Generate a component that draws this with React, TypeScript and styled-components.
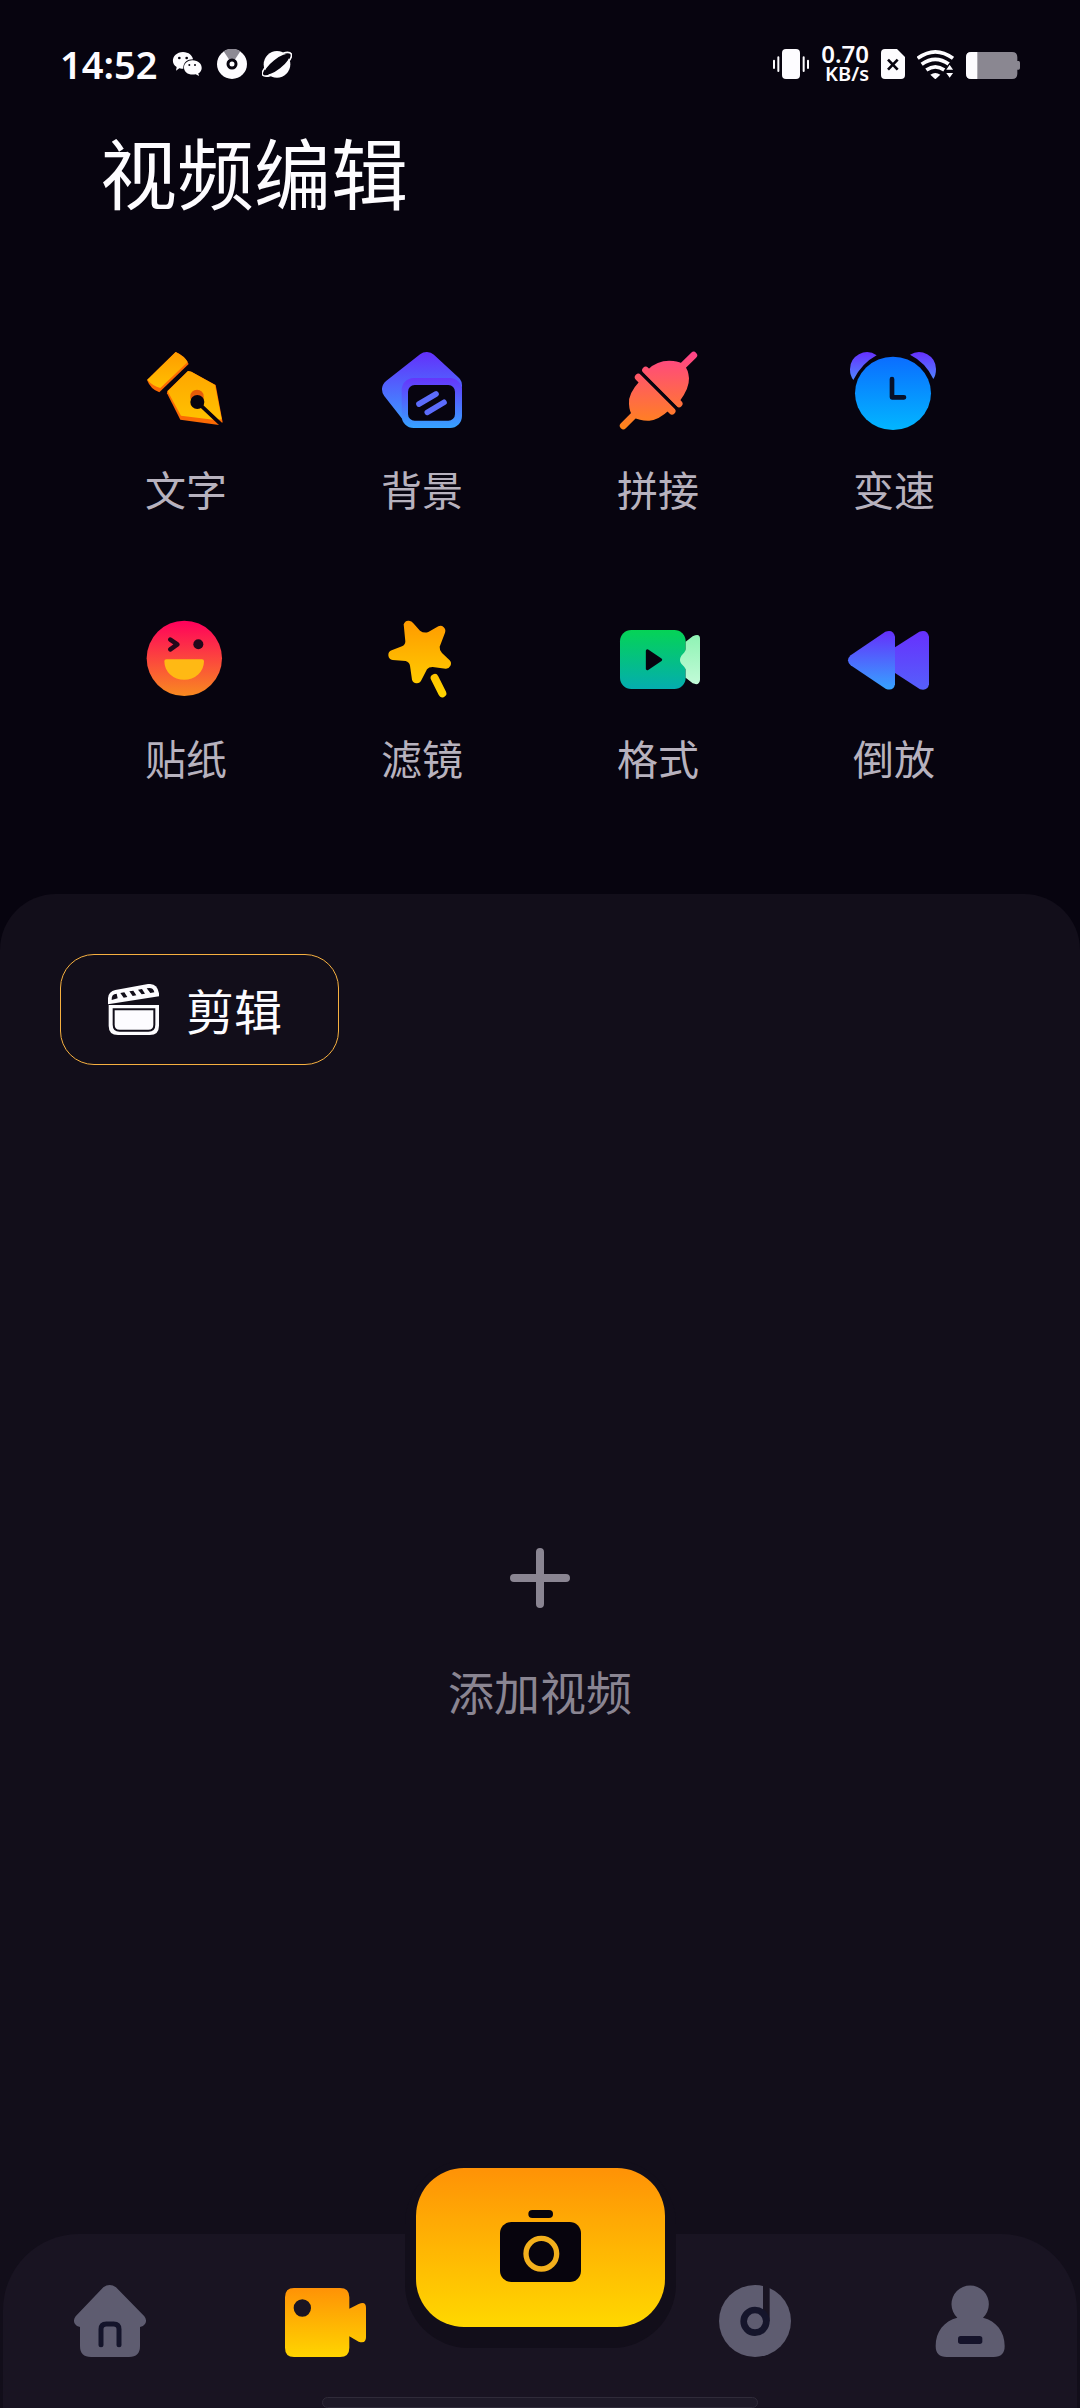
import React from "react";
import styled, { createGlobalStyle } from "styled-components";

const color = {
  page: "#07040f",
  panel: "#120e1a",
  bar: "#191422",
  ink: "#fdfcff",
  label: "#b7b2be",
  muted: "#8a8592",
  idle: "#5e5c70",
  outline: "#f6b040",
};

const GlobalStyle = createGlobalStyle`
  * { box-sizing: border-box; }
  body {
    margin: 0;
    background: ${color.page};
    color: ${color.ink};
    font-family: "Noto Sans", "Noto Sans CJK SC", sans-serif;
  }
  button { font: inherit; color: inherit; background: none; border: 0; padding: 0; cursor: pointer; }
  svg { display: block; flex: none; }
`;

const Screen = styled.div`
  min-height: 100vh;
  display: flex;
  flex-direction: column;
`;

const StatusBar = styled.header`
  display: flex;
  justify-content: space-between;
  align-items: center;
  height: 128px;
  padding: 0 60px;
`;

const StatusGroup = styled.div<{ $gap: number }>`
  display: flex;
  align-items: center;
  gap: ${(p) => p.$gap}px;
`;

const Time = styled.time`
  font-size: 38px;
  line-height: 40px;
  font-weight: 600;
`;

const Speed = styled.div`
  display: flex;
  flex-direction: column;
  align-items: flex-end;
  font-size: 24px;
  line-height: 20px;
  font-weight: 600;
  small {
    font-size: 20px;
    line-height: 20px;
  }
`;

const Title = styled.h1`
  margin: 0;
  padding: 0 100px;
  font-size: 77px;
  line-height: 94px;
  font-weight: 400;
`;

const ToolGrid = styled.section`
  display: grid;
  grid-template-columns: repeat(4, 1fr);
  row-gap: 79px;
  padding: 128px 68px 85px;
`;

const Tool = styled.button`
  display: flex;
  flex-direction: column;
  align-items: center;
  gap: 30px;
  color: ${color.label};
  font-size: 41px;
  line-height: 60px;
  height: 190px;
`;

const Panel = styled.main`
  flex: 1;
  display: flex;
  flex-direction: column;
  align-items: flex-start;
  padding: 60px 60px 0;
  background: ${color.panel};
  border-radius: 56px 56px 0 0;
`;

const ClipButton = styled.button`
  display: flex;
  align-items: center;
  gap: 27px;
  height: 111px;
  padding: 0 56px 0 47px;
  border: 1px solid ${color.outline};
  border-radius: 34px;
  font-size: 48px;
  line-height: 60px;
`;

const ClipLabel = styled.span`
  padding-top: 4px;
`;

const AddArea = styled.div`
  flex: 1;
  align-self: stretch;
  display: flex;
  align-items: center;
  justify-content: center;
  padding-bottom: 30px;
`;

const AddButton = styled.button`
  display: flex;
  flex-direction: column;
  align-items: center;
  gap: 54px;
  color: ${color.muted};
  font-size: 46px;
  line-height: 60px;
`;

const Footer = styled.footer`
  padding: 0 3px;
  background: ${color.panel};
`;

const TabBar = styled.nav`
  display: flex;
  flex-direction: column;
  align-items: center;
  background: ${color.bar};
  border-radius: 76px 76px 0 0;
`;

const Tabs = styled.div`
  display: grid;
  grid-template-columns: repeat(5, minmax(0, 1fr));
  align-self: stretch;
  justify-items: center;
  height: 163px;
`;

const Tab = styled.button`
  height: 72px;
  margin-top: 51px;
`;

const CameraSlot = styled.div`
  display: flex;
  align-items: flex-start;
  justify-content: center;
  justify-self: center;
  width: 271px;
  height: 188px;
  margin-top: -74px;
  padding-top: 8px;
  background: ${color.panel};
  border-radius: 64px;
`;

const CameraButton = styled.button`
  display: flex;
  flex: none;
  align-items: center;
  justify-content: center;
  width: 249px;
  height: 159px;
  padding-bottom: 3px;
  border-radius: 48px;
  background: linear-gradient(#ff9206, #ffd800);
`;

const GestureBar = styled.div`
  width: 436px;
  height: 11px;
  border: 1px solid #2f2b39;
  border-radius: 6px;
  background: #1e1a28;
`;

type GradProps = { id: string; y1: number; y2: number; from: string; to: string };
const Grad = ({ id, y1, y2, from, to }: GradProps) => (
  <linearGradient id={id} gradientUnits="userSpaceOnUse" x1="0" x2="0" y1={y1} y2={y2}>
    <stop offset="0" stopColor={from} />
    <stop offset="1" stopColor={to} />
  </linearGradient>
);

const ToolSvg = ({ origin, children }: { origin: string; children: React.ReactNode }) => (
  <svg width="96" height="80" viewBox={`${origin} 288 240`} fill="none" strokeLinecap="round" strokeLinejoin="round" aria-hidden="true">
    {children}
  </svg>
);

const PenIcon = () => (
  <ToolSvg origin="54 60">
    <defs><Grad id="pen" y1={66} y2={285} from="#ff9c00" to="#ffc400" /><Grad id="cap" y1={66} y2={187} from="#ff9c00" to="#ffc400" /></defs>
    <path d="M167 66 Q196 78 206 102 L118 187 Q92 178 81 150Z" fill="#fb6a04" />
    <path d="M167 66 Q192 78 203 96 L121 174 Q98 168 82 149Z" fill="url(#cap)" />
    <path d="M204 123L214 125L287 165L308 277L297 285L181 269L141 190L142 183Z" fill="#fb6a04" />
    <path d="M204 123L214 125L285 165L305 268L286 270L183 257L143 184Z" fill="url(#pen)" />
    <path d="M211 206V199A20 20 0 0 1 251 199V210Z" fill="#e85c08" />
    <circle cx="232" cy="216" r="21" fill={color.page} />
    <path d="M240 224L303 283" stroke={color.page} strokeWidth="11" />
  </ToolSvg>
);

const BackgroundIcon = () => (
  <ToolSvg origin="762 60">
    <defs>
      <Grad id="bgBack" y1={66} y2={265} from="#6330fb" to="#3f94ff" />
      <Grad id="bgFront" y1={145} y2={293} from="#6536fb" to="#36a2ff" />
    </defs>
    <path d="M920 98L818 178L878 255L994 166Z" fill="url(#bgBack)" stroke="url(#bgBack)" strokeWidth="64" />
    <rect x="845" y="144" width="181" height="150" rx="36" fill="url(#bgFront)" />
    <rect x="864" y="165" width="141" height="107" rx="20" fill={color.page} />
    <path d="M897 222L948 192M922 247L972 217" stroke="#5c6cfc" strokeWidth="17" />
  </ToolSvg>
);

const PlugIcon = () => (
  <ToolSvg origin="90 60">
    <defs><Grad id="plug" y1={66} y2={298} from="#ff4389" to="#ff8618" /></defs>
    <g stroke="url(#plug)" strokeWidth="21">
      <path d="M341 76L305 111M130 287L166 251M197 121L297 221M175 142L276 243" />
    </g>
    <path d="M205 118Q235 88 280 93Q300 95 312 104Q325 118 327 145Q328 175 300 212Z" fill="url(#plug)" />
    <path d="M180 152Q143 192 147 222Q148 246 160 262Q180 273 208 272Q236 270 268 240Z" fill="url(#plug)" />
    <path d="M182 127L292 237" stroke={color.page} strokeWidth="9" strokeLinecap="butt" />
  </ToolSvg>
);

const ClockIcon = () => (
  <ToolSvg origin="798 60">
    <defs>
      <Grad id="ears" y1={66} y2={150} from="#6630ff" to="#4f86ff" />
      <Grad id="clock" y1={80} y2={300} from="#0b6dff" to="#02b6ff" />
    </defs>
    <path d="M820 150Q810 136 810 119A51 51 0 0 1 890 76Q845 100 820 150Z" fill="url(#ears)" />
    <path d="M1060 147Q1068 136 1068 117A51 51 0 0 0 990 74Q1038 98 1060 147Z" fill="url(#ears)" />
    <ellipse cx="939" cy="190" rx="114" ry="110" fill="url(#clock)" />
    <path d="M936 147V202H972" stroke="#071129" strokeWidth="14" />
  </ToolSvg>
);

const StickerIcon = () => (
  <ToolSvg origin="54 57">
    <defs><Grad id="face" y1={62} y2={288} from="#ff005c" to="#f88a20" /></defs>
    <circle cx="193" cy="175" r="113" fill="url(#face)" />
    <path d="M151 119L172 133L151 148" stroke="#22081b" strokeWidth="14" />
    <circle cx="235" cy="133" r="15" fill="#22081b" />
    <path d="M139 178H246Q252 178 252 184A59 55 0 0 1 133 184Q133 178 139 178Z" fill="#ffb914" />
  </ToolSvg>
);

const FilterIcon = () => (
  <ToolSvg origin="762 57">
    <defs><Grad id="star" y1={62} y2={292} from="#ff9a00" to="#ffd600" /></defs>
    <path d="M851 73A16 16 0 0 1 880 70L900 92Q912 101 925 96L955 79A15 15 0 0 1 975 98L959 140Q958 150 966 159L989 181A15 15 0 0 1 977 206L938 201Q926 201 921 208L904 241A15 15 0 0 1 876 239L870 197Q868 186 857 183L818 180A15 15 0 0 1 815 151L846 139Q856 135 856 124Z" fill="url(#star)" />
    <path d="M944 234L967 280" stroke="url(#star)" strokeWidth="24" />
  </ToolSvg>
);

const FormatIcon = () => (
  <ToolSvg origin="90 57">
    <defs>
      <Grad id="format" y1={90} y2={267} from="#05d356" to="#04adaf" />
      <Grad id="lens" y1={105} y2={252} from="#8ff3b4" to="#c2fbd8" />
    </defs>
    <rect x="120" y="90" width="197" height="177" rx="34" fill="url(#format)" />
    <path d="M317 125L338 109Q360 98 360 116V240Q358 258 338 250L317 233V208Q314 200 304 191Q296 180 304 167Q316 156 317 148Z" fill="url(#lens)" />
    <path d="M202 152L242 179L202 206Z" fill={color.page} stroke={color.page} strokeWidth="9" />
  </ToolSvg>
);

const ReverseIcon = () => (
  <ToolSvg origin="798 57">
    <defs>
      <Grad id="revBack" y1={92} y2={270} from="#6730fd" to="#5560fb" />
      <Grad id="revFront" y1={92} y2={270} from="#652ffb" to="#36a4ff" />
    </defs>
    <path d="M1047 110V253Q1043 274 1020 268L885 180L1018 95Q1042 87 1047 110Z" fill="url(#revBack)" />
    <path d="M945 110V253Q941 274 918 267L812 196Q796 181 812 166L916 95Q940 87 945 110Z" fill="url(#revFront)" />
  </ToolSvg>
);

const tools = [
  { name: "文字", Icon: PenIcon },
  { name: "背景", Icon: BackgroundIcon },
  { name: "拼接", Icon: PlugIcon },
  { name: "变速", Icon: ClockIcon },
  { name: "贴纸", Icon: StickerIcon },
  { name: "滤镜", Icon: FilterIcon },
  { name: "格式", Icon: FormatIcon },
  { name: "倒放", Icon: ReverseIcon },
];

const ClapperIcon = () => (
  <svg width="51" height="51" viewBox="324 312 153 153" fill={color.ink} aria-hidden="true">
    <path d="M326 375H477V437Q477 465 449 465H354Q326 465 326 437Z" />
    <path d="M341 388H463V434Q463 452 445 452H359Q341 452 341 434Z" stroke={color.panel} strokeWidth="6" />
    <path d="M324 373V354Q326 334 346 330L444 312Q472 310 477 340V349Z" />
    <path d="M335 360Q334 341 350 341L353 355ZM361 339L373 337L382 351L371 353ZM388 334L400 332L409 346L398 348ZM414 329L426 327L435 341L425 343ZM440 325Q460 320 463 337L451 339Z" fill={color.panel} />
  </svg>
);

const PlusIcon = () => (
  <svg width="60" height="60" viewBox="0 0 60 60" stroke="currentColor" strokeWidth="8" strokeLinecap="round" aria-hidden="true">
    <path d="M30 4V56M4 30H56" />
  </svg>
);

const HomeIcon = () => (
  <svg width="72" height="72" viewBox="216 435 216 216" fill={color.idle} aria-hidden="true">
    <path d="M304 442Q323 428 342 442L427 529Q436 541 429 552Q424 560 414 561V618Q414 651 381 651H267Q234 651 234 618V561Q224 560 219 552Q212 541 221 529Z" />
    <path d="M297 614V568Q297 552 313 552H335Q351 552 351 568V614" fill="none" stroke="#14142a" strokeWidth="15" strokeLinecap="round" />
  </svg>
);

const VideoIcon = () => (
  <svg width="81" height="72" viewBox="855 435 243 216" fill="url(#tabVideo)" aria-hidden="true">
    <defs><Grad id="tabVideo" y1={444} y2={651} from="#ff9206" to="#ffd500" /></defs>
    <path fillRule="evenodd" d="M882 444H1020Q1048 444 1048 472V506L1076 492Q1098 482 1098 504V592Q1098 612 1076 605L1048 589V623Q1048 651 1020 651H882Q855 651 855 623V472Q855 444 882 444ZM881 504A26 26 0 1 0 933 504A26 26 0 1 0 881 504Z" />
  </svg>
);

const MusicIcon = () => (
  <svg width="72" height="72" viewBox="120 255 216 216" fill={color.idle} aria-hidden="true">
    <circle cx="228" cy="363" r="108" />
    <path d="M262 250V364" stroke={color.bar} strokeWidth="20" />
    <circle cx="228" cy="364" r="34" stroke="#15152b" strokeWidth="20" />
  </svg>
);

const ProfileIcon = () => (
  <svg width="72" height="72" viewBox="763 255 216 216" fill={color.idle} aria-hidden="true">
    <path d="M833 353A56 56 0 1 1 910 353C950 363 975 395 975 438Q975 471 942 471H801Q768 471 768 438C768 395 793 363 833 353Z" />
    <rect x="835" y="408" width="73" height="24" rx="8" fill="#15132a" />
  </svg>
);

const CameraIcon = () => (
  <svg width="81" height="72" viewBox="357 210 243 216" fill="#07040d" aria-hidden="true">
    <rect x="442" y="210" width="74" height="24" rx="12" />
    <rect x="357" y="246" width="243" height="180" rx="34" />
    <circle cx="481" cy="341" r="46" stroke="#f3b01c" strokeWidth="16" />
  </svg>
);

const WechatIcon = () => (
  <svg width="30" height="30" viewBox="399 57 90 90" fill={color.ink} aria-hidden="true">
    <path d="M432 66C449 66 461 77 462 88C444 88 432 99 433 116Q426 117 421 115L411 122L413 111C391 98 403 66 432 66Z" />
    <path d="M460 91C490 91 496 121 478 130L480 138L470 133C448 137 434 126 435 111C436 100 446 91 460 91Z" />
    <g fill={color.page}><circle cx="421" cy="84" r="4" /><circle cx="443" cy="84" r="4" /><circle cx="451" cy="105" r="3" /><circle cx="468" cy="105" r="3" /></g>
  </svg>
);

const DiscIcon = () => (
  <svg width="30" height="30" viewBox="534 57 90 90" aria-hidden="true">
    <circle cx="579" cy="102" r="45" fill={color.ink} />
    <path d="M579 102L554 64A45 45 0 0 1 604 64Z" fill="#8d8a94" />
    <circle cx="579" cy="102" r="12" fill={color.ink} stroke={color.page} strokeWidth="9" />
  </svg>
);

const PlanetIcon = () => (
  <svg width="30" height="30" viewBox="669 57 90 90" aria-hidden="true">
    <circle cx="714" cy="103" r="40" fill={color.ink} />
    <ellipse cx="714" cy="103" rx="46" ry="15" transform="rotate(-38 714 103)" fill={color.page} />
    <path d="M733 69Q752 64 757 72Q760 82 746 98M682 108Q667 126 670 134Q676 142 695 136" fill="none" stroke={color.ink} strokeWidth="5" />
  </svg>
);

const VibrateIcon = () => (
  <svg width="36" height="30" viewBox="72 57 108 90" fill={color.ink} aria-hidden="true">
    <rect x="99" y="57" width="54" height="90" rx="12" />
    <path d="M75 92V114M88 82V123M164 82V123M177 92V114" stroke={color.ink} strokeWidth="6" strokeLinecap="round" />
  </svg>
);

const SimIcon = () => (
  <svg width="24" height="30" viewBox="396 57 72 90" aria-hidden="true">
    <path d="M408 57H444L468 81V135Q468 147 456 147H408Q396 147 396 135V69Q396 57 408 57Z" fill={color.ink} />
    <path d="M417 89L446 119M446 89L417 119" stroke={color.page} strokeWidth="8" />
  </svg>
);

const WifiIcon = () => (
  <svg width="37" height="30" viewBox="504 57 111 90" fill="none" aria-hidden="true">
    <path d="M506 85Q559 46 612 85M518 103Q559 73 600 103M532 120Q559 101 586 120" stroke={color.ink} strokeWidth="11" />
    <path d="M544 134Q559 124 574 134L559 148Z" fill={color.ink} />
    <path d="M602 101L616 121H588ZM602 147L616 127H588Z" fill={color.ink} stroke={color.page} strokeWidth="4" />
  </svg>
);

const BatteryIcon = () => (
  <svg width="54" height="30" viewBox="648 57 162 90" aria-hidden="true">
    <path d="M664 66H786Q802 66 802 82V93H806Q810 93 810 98V114Q810 119 806 119H802V131Q802 147 786 147H664Q648 147 648 131V82Q648 66 664 66Z" fill="#8a8791" />
    <path d="M682 66V147H664Q648 147 648 131V82Q648 66 664 66Z" fill={color.ink} />
  </svg>
);

export default function App() {
  return (
    <>
      <GlobalStyle />
      <Screen>
        <StatusBar>
          <StatusGroup $gap={15}>
            <Time>14:52</Time>
            <WechatIcon />
            <DiscIcon />
            <PlanetIcon />
          </StatusGroup>
          <StatusGroup $gap={12}>
            <VibrateIcon />
            <Speed>
              <span>0.70</span>
              <small>KB/s</small>
            </Speed>
            <SimIcon />
            <WifiIcon />
            <BatteryIcon />
          </StatusGroup>
        </StatusBar>

        <Title>视频编辑</Title>

        <ToolGrid>
          {tools.map(({ name, Icon }) => (
            <Tool key={name} type="button">
              <Icon />
              {name}
            </Tool>
          ))}
        </ToolGrid>

        <Panel>
          <ClipButton type="button">
            <ClapperIcon />
            <ClipLabel>剪辑</ClipLabel>
          </ClipButton>
          <AddArea>
            <AddButton type="button">
              <PlusIcon />
              添加视频
            </AddButton>
          </AddArea>
        </Panel>

        <Footer>
          <TabBar>
            <Tabs>
              <Tab type="button" aria-label="首页"><HomeIcon /></Tab>
              <Tab type="button" aria-label="视频"><VideoIcon /></Tab>
              <CameraSlot>
                <CameraButton type="button" aria-label="拍摄"><CameraIcon /></CameraButton>
              </CameraSlot>
              <Tab type="button" aria-label="音乐"><MusicIcon /></Tab>
              <Tab type="button" aria-label="我的"><ProfileIcon /></Tab>
            </Tabs>
            <GestureBar />
          </TabBar>
        </Footer>
      </Screen>
    </>
  );
}
